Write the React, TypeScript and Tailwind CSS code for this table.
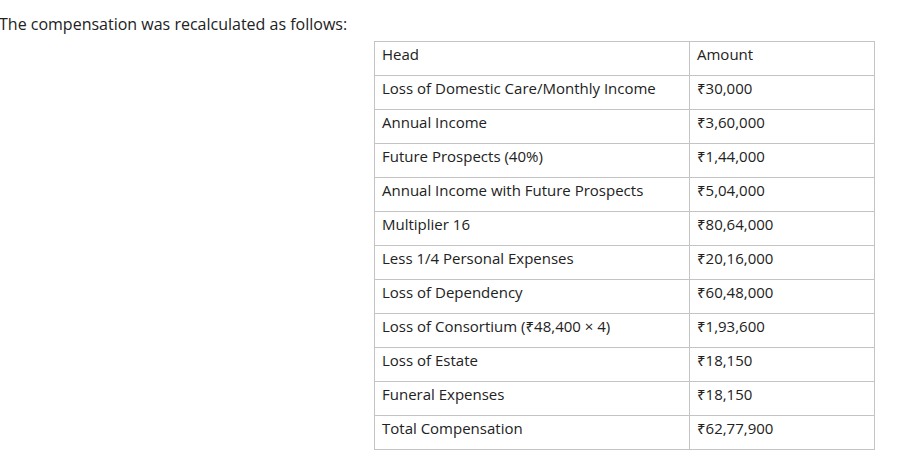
import React from "react";

const rows: [string, string][] = [
  ["Head", "Amount"],
  ["Loss of Domestic Care/Monthly Income", "₹30,000"],
  ["Annual Income", "₹3,60,000"],
  ["Future Prospects (40%)", "₹1,44,000"],
  ["Annual Income with Future Prospects", "₹5,04,000"],
  ["Multiplier 16", "₹80,64,000"],
  ["Less 1/4 Personal Expenses", "₹20,16,000"],
  ["Loss of Dependency", "₹60,48,000"],
  ["Loss of Consortium (₹48,400 × 4)", "₹1,93,600"],
  ["Loss of Estate", "₹18,150"],
  ["Funeral Expenses", "₹18,150"],
  ["Total Compensation", "₹62,77,900"],
];

export default function App() {
  return (
    <div
      className="w-[919px] h-[463px] bg-white text-[#222222] overflow-hidden"
      style={{ fontFamily: '"Open Sans", "Noto Sans", sans-serif' }}
    >
      <p className="pt-[12px] -ml-[1px] text-[16px] leading-[24px]">
        The compensation was recalculated as follows:
      </p>
      <table className="mt-[5px] ml-[374px] w-[501px] border-collapse text-[15px] leading-[22px]">
        <tbody>
          {rows.map(([a, b], i) => (
            <tr key={i}>
              <td className="w-[315px] border border-[#c4c4c4] pl-[7px] pt-[1px] pb-[10px] align-top">
                {a}
              </td>
              <td className="border border-[#c4c4c4] pl-[7px] pt-[1px] pb-[10px] align-top">
                {b}
              </td>
            </tr>
          ))}
        </tbody>
      </table>
    </div>
  );
}
